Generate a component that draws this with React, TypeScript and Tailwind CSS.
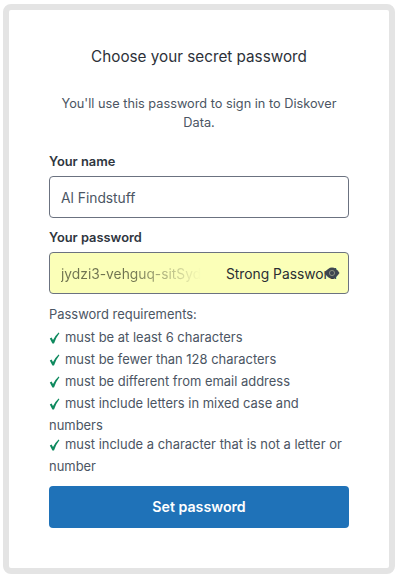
const requirements = [
  { text: 'must be at least 6 characters', mt: '' },
  { text: 'must be fewer than 128 characters', mt: '' },
  { text: 'must be different from email address', mt: '' },
  { text: 'must include letters in mixed case and numbers', mt: '' },
  { text: 'must include a character that is not a letter or number', mt: '-mt-[3px]' },
];

function Check() {
  return (
    <svg width="11" height="12" viewBox="0 0 11 12" className="mr-[5px] inline-block align-[-2px]">
      <path d="M0.8 6.6 L2.6 5.6 L4 8 Q6 4 9.6 0.6 L10.4 1.2 Q7 5.4 5 11.4 L3.4 11.4 Z" fill="#0f8a5f" />
    </svg>
  );
}

function PasswordEye() {
  return (
    <svg width="16" height="12" viewBox="0 0 16 12" className="absolute right-[8px] top-[14px]">
      <path d="M0.5 6 Q4 0.5 8 0.5 Q12 0.5 15.5 6 Q12 11.5 8 11.5 Q4 11.5 0.5 6 Z" fill="#3f4650" />
      <circle cx="8" cy="6" r="2.6" fill="none" stroke="#9aa08a" strokeWidth="0.8" />
    </svg>
  );
}

export default function App() {
  return (
    <div className="h-[579px] w-[400px] bg-white pl-[3px] pt-[4px] font-['Inter',sans-serif] text-[#4b5563]">
      <div className="h-[570px] w-[392px] rounded-[8px] border-[6px] border-[#e4e4e4] bg-white px-[40px] pt-[35px]">
        <h1 className="text-center text-[15.25px] leading-[24px] text-[#2d3139]">Choose your secret password</h1>
        <p className="mx-auto mt-[25px] w-[290px] text-center text-[12.75px] leading-[19px]">
          You'll use this password to sign in to Diskover Data.
        </p>

        <label className="mt-[21px] block text-[12.85px] font-semibold leading-[18px] text-[#2f3640]">Your name</label>
        <div className="mt-[5px] flex h-[42px] w-[300px] items-center rounded-[4px] border border-[#6b7280] px-[11px] pt-[2px] text-[13.8px] text-[#4b5563]">
          Al Findstuff
        </div>

        <label className="mt-[11px] block text-[12.85px] font-semibold leading-[18px] text-[#2f3640]">Your password</label>
        <div className="relative mt-[5px] flex h-[42px] w-[300px] items-center overflow-hidden rounded-[4px] border border-[#6b7280] bg-[#fbffb8] pl-[11px] pt-[2px] text-[13.8px]">
          <span className="bg-gradient-to-r from-[#6f7350] from-50% to-[#fbffb8] bg-clip-text text-transparent">jydzi3-vehguq-sitSyd</span>
          <span className="absolute left-[176px] top-[12px] whitespace-nowrap leading-[18px] text-[#2a2e33]">Strong Password</span>
          <PasswordEye />
        </div>

        <p className="mt-[11px] text-[12.95px] leading-[18px]">Password requirements:</p>
        <ul className="mt-[3px] text-[12.95px]">
          {requirements.map((r) => (
            <li key={r.text} className={`${r.mt} leading-[22px]`.trim()}>
              <Check />
              {r.text}
            </li>
          ))}
        </ul>

        <button className="mt-[9px] h-[42px] w-[300px] rounded-[4px] bg-[#1f72b8] text-[14.2px] font-semibold text-white">
          Set password
        </button>
      </div>
    </div>
  );
}
